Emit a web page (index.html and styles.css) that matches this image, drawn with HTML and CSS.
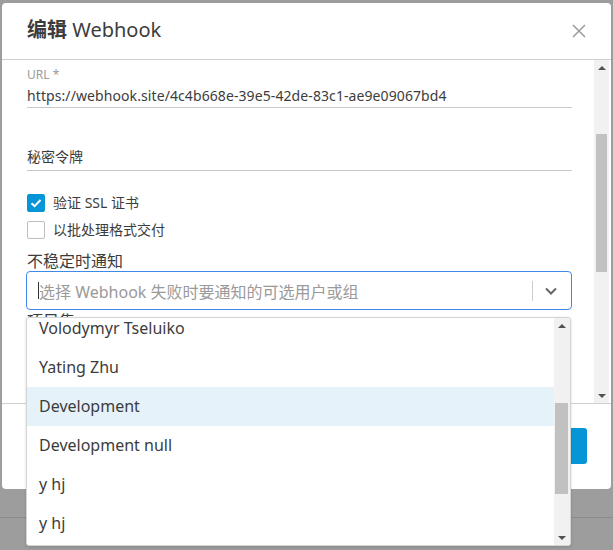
FILE: index.html
```html
<!DOCTYPE html>
<html lang="zh">
<head>
<meta charset="utf-8">
<title>编辑 Webhook</title>
<link rel="stylesheet" href="styles.css">
</head>
<body>
<div class="stage">
  <div class="modal">
    <div class="modal-header">
      <h1 class="modal-title"><span class="title-cjk">编辑</span> Webhook</h1>
      <svg class="close" width="14" height="14" viewBox="0 0 14 14"><path d="M1 1L13 13M13 1L1 13" stroke="#9a9a9a" stroke-width="1.5" fill="none"/></svg>
    </div>
    <div class="modal-body">
      <div class="body-content">
        <div class="field">
          <div class="field-label">URL *</div>
          <div class="field-input url-input">https://webhook.site/4c4b668e-39e5-42de-83c1-ae9e09067bd4</div>
        </div>
        <div class="field field-secret">
          <div class="field-input field-input-secret">秘密令牌</div>
        </div>
        <div class="check-row check-first">
          <span class="checkbox checked"><svg width="18" height="18" viewBox="0 0 18 18"><path d="M4.5 9.2L7.6 12.2L13.5 6" stroke="#fff" stroke-width="2" fill="none"/></svg></span>
          <span class="check-label">验证 SSL 证书</span>
        </div>
        <div class="check-row">
          <span class="checkbox"></span>
          <span class="check-label">以批处理格式交付</span>
        </div>
        <div class="section-label">不稳定时通知</div>
        <div class="select">
          <span class="caret"></span>
          <span class="placeholder">选择 Webhook 失败时要通知的可选用户或组</span>
          <span class="sel-divider"></span>
          <svg class="chevron" width="14" height="10" viewBox="0 0 14 10"><path d="M2 2.5L7 7.5L12 2.5" stroke="#666" stroke-width="2" fill="none"/></svg>
        </div>
        <div class="section-label next-label">项目集</div>
      </div>
      <div class="scrollbar body-scroll">
        <span class="arrow up"></span>
        <div class="track"><div class="thumb body-thumb"></div></div>
        <span class="arrow down"></span>
      </div>
    </div>
    <div class="modal-footer">
      <button class="btn-primary">保存</button>
    </div>
  </div>
  <div class="backdrop-line"></div>

  <div class="dropdown">
    <ul class="options">
      <li class="option first">Volodymyr Tseluiko</li>
      <li class="option">Yating Zhu</li>
      <li class="option active">Development</li>
      <li class="option">Development null</li>
      <li class="option">y hj</li>
      <li class="option">y hj</li>
    </ul>
    <div class="scrollbar list-scroll">
      <span class="arrow up"></span>
      <div class="track"><div class="thumb list-thumb"></div></div>
      <span class="arrow down"></span>
    </div>
  </div>
</div>
</body>
</html>
```

FILE: styles.css
```css
* { box-sizing: border-box; }
html, body { margin: 0; padding: 0; }
body {
  background: #9d9d9d;
  font-family: "Noto Sans", "Noto Sans CJK SC", sans-serif;
  color: #3c3c3c;
  width: 613px;
  height: 550px;
  overflow: hidden;
}
.stage {
  position: relative;
  width: 613px;
  height: 550px;
  padding-top: 3px;
}
.modal {
  margin-left: 2px;
  width: 609px;
  height: 486px;
  background: #fff;
  border-radius: 4px;
  display: flex;
  flex-direction: column;
  overflow: hidden;
}
.modal-header {
  height: 57px;
  flex: none;
  border-bottom: 1px solid #cfcfcf;
  display: flex;
  align-items: center;
  justify-content: space-between;
  padding: 0 26px 0 25px;
}
.modal-title {
  margin: 0;
  font-size: 20px;
  font-weight: 400;
  color: #3c3c3c;
  line-height: 24px;
  margin-top: -3px;
}
.title-cjk { font-weight: 700; }
.close { display: block; margin-right: -1px; }

.modal-body {
  height: 343px;
  flex: none;
  display: flex;
  padding-right: 2px;
}
.body-content {
  flex: 1;
  padding: 7px 22px 0 25px;
  overflow: hidden;
}
.field-label {
  font-size: 12px;
  line-height: 16px;
  color: #9a9a9a;
}
.field-input {
  margin-top: 3px;
  font-size: 14px;
  line-height: 20px;
  padding-bottom: 1px;
  border-bottom: 1px solid #c8c8c8;
  color: #3c3c3c;
  white-space: nowrap;
}
.url-input { letter-spacing: 0.09px; }
.field-secret { margin-top: 39px; }
.field-input-secret { margin-top: 0; padding-bottom: 3px; font-size: 14px; }

.check-row {
  display: flex;
  align-items: center;
  height: 18px;
  margin-top: 9px;
}
.check-first { margin-top: 23px; }
.checkbox {
  width: 18px;
  height: 18px;
  border: 1px solid #bdbdbd;
  border-radius: 2px;
  background: #fff;
  flex: none;
}
.checkbox.checked {
  background: #0696d7;
  border-color: #0696d7;
}
.checkbox.checked svg { display: block; margin: -1px; }
.check-label {
  margin-left: 8px;
  font-size: 14px;
  line-height: 18px;
  color: #3c3c3c;
}
.section-label {
  margin-top: 12px;
  font-size: 16px;
  line-height: 20px;
  color: #3c3c3c;
}
.select {
  margin-left: -1px;
  height: 39px;
  border: 1px solid #3d8ae8;
  border-radius: 4px;
  display: flex;
  align-items: center;
  padding-left: 11px;
  padding-right: 13px;
}
.caret {
  width: 1px;
  height: 17px;
  background: #333;
  flex: none;
}
.placeholder {
  flex: 1;
  font-size: 16px;
  color: #9a9a9a;
  white-space: nowrap;
}
.sel-divider {
  width: 1px;
  height: 20px;
  background: #cccccc;
  margin-right: 11px;
}
.chevron { display: block; }
.next-label { margin-top: 1px; }

.scrollbar {
  width: 15px;
  background: #f1f1f1;
  display: flex;
  flex-direction: column;
  flex: none;
}
.arrow {
  height: 15px;
  flex: none;
  display: flex;
  align-items: center;
  justify-content: center;
}
.arrow.up::before {
  content: "";
  border-left: 4px solid transparent;
  border-right: 4px solid transparent;
  border-bottom: 4px solid #505050;
}
.arrow.down::before {
  content: "";
  border-left: 4px solid transparent;
  border-right: 4px solid transparent;
  border-top: 4px solid #505050;
}
.track { flex: 1; }
.thumb {
  margin: 0 2px;
  background: #c1c1c1;
}
.body-thumb { margin-top: 59px; height: 138px; }

.modal-footer {
  flex: 1;
  border-top: 1px solid #d0d0d0;
  display: flex;
  justify-content: flex-end;
  align-items: flex-start;
  padding: 24px 24px 0 0;
}
.btn-primary {
  width: 90px;
  height: 36px;
  border: none;
  border-radius: 3px;
  background: #0696d7;
  color: #fff;
  font-family: inherit;
  font-size: 14px;
}
.backdrop-line {
  margin-top: 28px;
  height: 1px;
  background: #8a8a8a;
}

.dropdown {
  position: absolute;
  left: 26px;
  top: 317px;
  width: 545px;
  height: 229px;
  background: #fff;
  border: 1px solid #d4d4d4;
  border-radius: 3px;
  display: flex;
  overflow: hidden;
  box-shadow: 0 1px 3px rgba(0,0,0,0.15);
}
.options {
  list-style: none;
  margin: 0;
  padding: 0;
  flex: 1;
  overflow: hidden;
}
.option {
  height: 39px;
  line-height: 39px;
  padding-left: 12px;
  font-size: 16px;
  color: #3c3c3c;
  white-space: nowrap;
}
.option.first { margin-top: -9px; }
.option.active { background: #e5f2fa; }
.list-scroll { width: 16px; }
.list-scroll .thumb { margin: 0 2px 0 1px; }
.list-thumb { margin-top: 70px !important; height: 91px; }
```
